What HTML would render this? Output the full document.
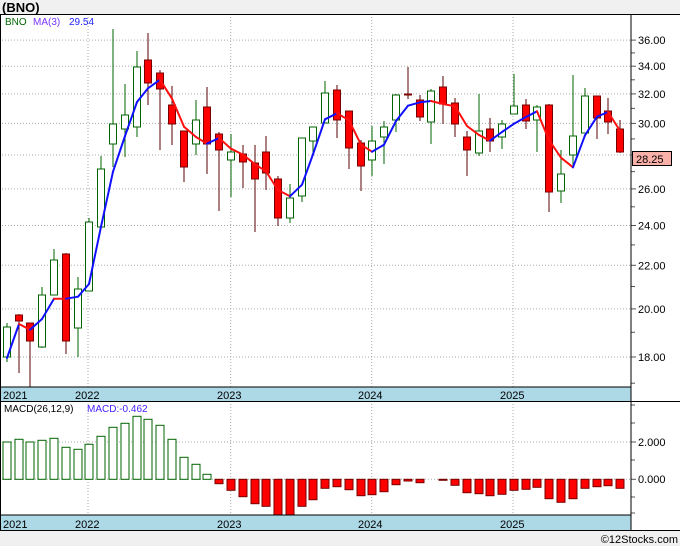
<!DOCTYPE html>
<html><head><meta charset="utf-8"><style>
html,body{margin:0;padding:0;background:#f0f0f0;}
body{width:680px;height:546px;overflow:hidden;position:relative;font-family:"Liberation Sans",sans-serif;}
svg{position:absolute;left:0;top:0;}
</style></head><body>
<svg id="s" width="680" height="546" xmlns="http://www.w3.org/2000/svg" font-family="Liberation Sans, sans-serif">
<rect x="0" y="0" width="680" height="546" fill="#f0f0f0"/>
<rect x="0" y="14" width="680" height="516" fill="#fff"/>
<text x="2" y="12" font-size="13" font-weight="bold" fill="#000">(BNO)</text>
<g id="g"></g>
<text x="5" y="25" font-size="10" fill="#006400">BNO</text>
<text x="33" y="25" font-size="10" fill="#7733ff">MA(3)</text>
<text x="69" y="25" font-size="10" fill="#2222ff">29.54</text>
<text x="4" y="412" font-size="10" fill="#000">MACD(26,12,9)</text>
<text x="87" y="412" font-size="10" fill="#4422ff">MACD:-0.462</text>
<text x="678" y="543" font-size="11" fill="#000" text-anchor="end">©12Stocks.com</text>
</svg>
<script>
var g=document.getElementById('g'),h='';
function yp(p){return 1678.8-457.3*Math.log(p);}
// grid
var xs=[88,230.7,371.7,513];
xs.forEach(function(x){h+='<line x1="'+x+'" y1="14" x2="'+x+'" y2="387" stroke="#aaa" stroke-dasharray="1,2"/>';
h+='<line x1="'+x+'" y1="401" x2="'+x+'" y2="515" stroke="#aaa" stroke-dasharray="1,2"/>';});
[36,34,32,30,28,26,24,22,20,18].forEach(function(p){var y=yp(p).toFixed(1);
h+='<line x1="2" y1="'+y+'" x2="631" y2="'+y+'" stroke="#aaa" stroke-dasharray="1,2"/>';
h+='<line x1="631" y1="'+y+'" x2="636" y2="'+y+'" stroke="#555"/>';
h+='<text x="638" y="'+(+y+4)+'" font-size="11" fill="#000">'+p.toFixed(2)+'</text>';});
[35,33,31,29,27,25,23,21,19,17].forEach(function(p){var y=yp(p).toFixed(1);h+='<line x1="631" y1="'+y+'" x2="635" y2="'+y+'" stroke="#555"/>';});
// candles: [x, color, bt, bb, wt, wb]
var C=[[7,'g',327,357,323,362],[19,'r',315,321,314,373],[30,'r',323,341,323,387],[42,'g',295,347,287,348],[54,'g',260,295,249,295],[66,'r',254,341,253,354],[78,'g',289,328,277,357],[89,'g',222,291,218,291],[101,'g',169,227,156,227],[113,'g',124,144,29,167],[125,'g',115,129,84,157],[137,'g',67,127,51,137],[148,'r',60,83,33,105],[160,'r',73,89,70,150],[172,'r',105,124,86,145],[184,'r',131,167,131,182],[196,'g',120,144,100,155],[207,'r',107,144,87,174],[219,'r',134,150,132,211],[231,'g',152,160,134,197],[243,'r',154,162,145,188],[255,'r',163,179,145,232],[266,'r',152,173,136,190],[278,'r',179,218,176,226],[290,'g',198,218,184,223],[302,'g',138,196,138,202],[313,'g',127,141,127,153],[325,'g',93,123,81,123],[337,'r',90,120,85,138],[349,'r',111,148,111,169],[361,'r',143,166,140,191],[372,'g',141,160,126,176],[384,'g',127,137,121,164],[396,'g',95,120,94,132],[408,'r',94,95,67,99],[420,'r',100,117,95,121],[431,'g',91,122,89,144],[443,'r',87,104,76,124],[455,'r',103,124,98,137],[467,'r',137,150,131,176],[479,'g',131,153,94,156],[490,'r',129,141,118,152],[502,'g',124,137,120,149],[514,'g',106,114,74,114],[526,'r',105,121,99,129],[537,'g',107,120,105,152],[549,'r',105,192,104,212],[561,'g',174,191,150,203],[573,'g',136,155,75,165],[585,'g',96,133,88,133],[597,'r',96,118,96,139],[608,'r',111,122,98,134],[620,'r',129,152,120,153]];
var cl=[];
C.forEach(function(c){var x=c[0];
if(c[1]=='g'){h+='<line x1="'+x+'" y1="'+c[4]+'" x2="'+x+'" y2="'+c[5]+'" stroke="#006400"/>';
h+='<rect x="'+(x-3.5)+'" y="'+c[2]+'" width="7" height="'+Math.max(1,c[3]-c[2])+'" fill="#fff" stroke="#006400"/>';cl.push(c[2]);}
else{h+='<line x1="'+x+'" y1="'+c[4]+'" x2="'+x+'" y2="'+c[5]+'" stroke="#5a0000"/>';
h+='<rect x="'+(x-3.5)+'" y="'+c[2]+'" width="7" height="'+Math.max(1,c[3]-c[2])+'" fill="#f00" stroke="#700"/>';cl.push(c[3]);}});
// MA
var ma=[];for(var i=0;i<cl.length;i++){var a=0,n=0;for(var j=Math.max(0,i-2);j<=i;j++){a+=cl[j];n++;}ma.push(a/n);}
ma[0]=358;
for(var i=1;i<ma.length;i++){var col=ma[i]<ma[i-1]?'#1010ff':'#ff1010';
h+='<line x1="'+C[i-1][0]+'" y1="'+ma[i-1].toFixed(1)+'" x2="'+C[i][0]+'" y2="'+ma[i].toFixed(1)+'" stroke="'+col+'" stroke-width="2" stroke-linecap="round"/>';}
// price tag
h+='<rect x="632.5" y="151.5" width="39" height="14" fill="#f8b0a8" stroke="#000"/><text x="636" y="163" font-size="11" fill="#000">28.25</text>';
// MACD
h+='<line x1="2" y1="442" x2="631" y2="442" stroke="#aaa" stroke-dasharray="1,2"/><line x1="2" y1="479.3" x2="631" y2="479.3" stroke="#aaa" stroke-dasharray="1,2"/>';
var gt=[216,208,216,211,205,232,238,223,199,172,160,139,148,166,208,262,283,313];
var rb=[341,361,380,401,409,436,436,409,389,355,350,359,377,374,365,344,333,338,329,331,346,368,371,377,373,361,358,352,386,397,386,355,350,347,355];
var z=479.3;
gt.forEach(function(t,i){var y=370+t/3,x=C[i][0];h+='<rect x="'+(x-4)+'" y="'+y.toFixed(1)+'" width="8" height="'+(z-y).toFixed(1)+'" fill="#fff" stroke="#006400"/>';});
rb.forEach(function(b,i){var y=Math.min(515,370+b/3),x=C[i+18][0];if(y-z<0.8)return;h+='<rect x="'+(x-4)+'" y="'+z+'" width="8" height="'+(y-z).toFixed(1)+'" fill="#f00" stroke="#700"/>';});
h+='<line x1="631" y1="442" x2="636" y2="442" stroke="#555"/><text x="638" y="446" font-size="11" fill="#000">2.000</text>';
h+='<line x1="631" y1="479.3" x2="636" y2="479.3" stroke="#555"/><text x="638" y="483" font-size="11" fill="#000">0.000</text>';
[405,423,460,497,513].forEach(function(y){h+='<line x1="631" y1="'+y+'" x2="635" y2="'+y+'" stroke="#555"/>';});
// bands
h+='<rect x="0" y="387" width="631" height="14" fill="#add8e6"/><rect x="0" y="515" width="631" height="15" fill="#add8e6"/>';
var lx=[[3,'2021'],[75,'2022'],[217,'2023'],[358,'2024'],[500,'2025']];
lx.forEach(function(l){h+='<text x="'+l[0]+'" y="399" font-size="11" fill="#000">'+l[1]+'</text><text x="'+l[0]+'" y="528" font-size="11" fill="#000">'+l[1]+'</text>';});
// borders
h+='<line x1="0" y1="14.5" x2="680" y2="14.5" stroke="#000"/><line x1="0" y1="387" x2="631" y2="387" stroke="#000"/>';
h+='<line x1="0" y1="401.5" x2="680" y2="401.5" stroke="#000"/><line x1="0" y1="515" x2="631" y2="515" stroke="#000"/>';
h+='<line x1="0" y1="530.5" x2="680" y2="530.5" stroke="#000"/><line x1="631" y1="14" x2="631" y2="530" stroke="#000"/>';
h+='<line x1="0.5" y1="14" x2="0.5" y2="530" stroke="#000"/>';
g.innerHTML=h;
</script>
</body></html>
